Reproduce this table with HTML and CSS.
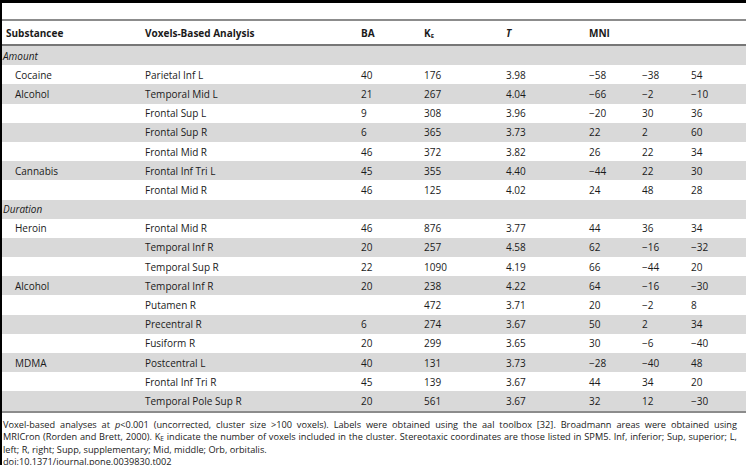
FILE: index.html
```html
<!DOCTYPE html>
<html lang="en">
<head>
  <meta charset="UTF-8" />
  <title>Table 2</title>
  <link rel="stylesheet" href="styles.css">
</head>
<body>
  <div class="frame">
    <table class="data">
      <colgroup>
        <col class="c-sub"><col class="c-vox"><col class="c-ba"><col class="c-ke">
        <col class="c-t"><col class="c-x"><col class="c-y"><col class="c-z">
      </colgroup>
      <thead>
        <tr>
          <th class="first">Substancee</th>
          <th>Voxels-Based Analysis</th>
          <th>BA</th>
          <th>K<sub>E</sub></th>
          <th><i>T</i></th>
          <th colspan="3">MNI</th>
        </tr>
      </thead>
      <tbody>
        <tr class="section"><td colspan="8"><i>Amount</i></td></tr>
        <tr><td class="drug">Cocaine</td><td>Parietal Inf L</td><td>40</td><td>176</td><td>3.98</td><td>−58</td><td>−38</td><td>54</td></tr>
        <tr><td class="drug">Alcohol</td><td>Temporal Mid L</td><td>21</td><td>267</td><td>4.04</td><td>−66</td><td>−2</td><td>−10</td></tr>
        <tr><td class="drug"></td><td>Frontal Sup L</td><td>9</td><td>308</td><td>3.96</td><td>−20</td><td>30</td><td>36</td></tr>
        <tr><td class="drug"></td><td>Frontal Sup R</td><td>6</td><td>365</td><td>3.73</td><td>22</td><td>2</td><td>60</td></tr>
        <tr><td class="drug"></td><td>Frontal Mid R</td><td>46</td><td>372</td><td>3.82</td><td>26</td><td>22</td><td>34</td></tr>
        <tr><td class="drug">Cannabis</td><td>Frontal Inf Tri L</td><td>45</td><td>355</td><td>4.40</td><td>−44</td><td>22</td><td>30</td></tr>
        <tr><td class="drug"></td><td>Frontal Mid R</td><td>46</td><td>125</td><td>4.02</td><td>24</td><td>48</td><td>28</td></tr>
        <tr class="section"><td colspan="8"><i>Duration</i></td></tr>
        <tr><td class="drug">Heroin</td><td>Frontal Mid R</td><td>46</td><td>876</td><td>3.77</td><td>44</td><td>36</td><td>34</td></tr>
        <tr><td class="drug"></td><td>Temporal Inf R</td><td>20</td><td>257</td><td>4.58</td><td>62</td><td>−16</td><td>−32</td></tr>
        <tr><td class="drug"></td><td>Temporal Sup R</td><td>22</td><td>1090</td><td>4.19</td><td>66</td><td>−44</td><td>20</td></tr>
        <tr><td class="drug">Alcohol</td><td>Temporal Inf R</td><td>20</td><td>238</td><td>4.22</td><td>64</td><td>−16</td><td>−30</td></tr>
        <tr><td class="drug"></td><td>Putamen R</td><td></td><td>472</td><td>3.71</td><td>20</td><td>−2</td><td>8</td></tr>
        <tr><td class="drug"></td><td>Precentral R</td><td>6</td><td>274</td><td>3.67</td><td>50</td><td>2</td><td>34</td></tr>
        <tr><td class="drug"></td><td>Fusiform R</td><td>20</td><td>299</td><td>3.65</td><td>30</td><td>−6</td><td>−40</td></tr>
        <tr><td class="drug">MDMA</td><td>Postcentral L</td><td>40</td><td>131</td><td>3.73</td><td>−28</td><td>−40</td><td>48</td></tr>
        <tr><td class="drug"></td><td>Frontal Inf Tri R</td><td>45</td><td>139</td><td>3.67</td><td>44</td><td>34</td><td>20</td></tr>
        <tr><td class="drug"></td><td>Temporal Pole Sup R</td><td>20</td><td>561</td><td>3.67</td><td>32</td><td>12</td><td>−30</td></tr>
      </tbody>
    </table>
    <div class="notes">
      <span class="line full">Voxel-based analyses at <i>p</i>&lt;0.001 (uncorrected, cluster size &gt;100 voxels). Labels were obtained using the aal toolbox [32]. Broadmann areas were obtained using</span>
      <span class="line full">MRICron (Rorden and Brett, 2000). K<sub>E</sub> indicate the number of voxels included in the cluster. Stereotaxic coordinates are those listed in SPM5. Inf, inferior; Sup, superior; L,</span>
      <span class="line">left; R, right; Supp, supplementary; Mid, middle; Orb, orbitalis.</span>
      <span class="line">doi:10.1371/journal.pone.0039830.t002</span>
    </div>
  </div>
</body>
</html>
```

FILE: styles.css
```css
html, body {
  margin: 0;
  padding: 0;
  background: #fff;
}
body {
  font-family: "Open Sans", "DejaVu Sans", sans-serif;
  font-size: 10px;
  color: #1a1a1a;
}
.frame {
  border-top: 3px solid #000;
  border-left: 2px solid #000;
  height: 465px;
  padding-top: 16px;
  box-sizing: border-box;
  overflow: hidden;
}
.data {
  width: 744px;
  border-collapse: collapse;
  table-layout: fixed;
  border-top: 2px solid #8c8c8c;
  border-bottom: 2px solid #8c8c8c;
}
.c-sub { width: 143px; }
.c-vox { width: 216px; }
.c-ba { width: 63px; }
.c-ke { width: 82px; }
.c-t { width: 83px; }
.c-x { width: 53px; }
.c-y { width: 49px; }
.c-z { width: 55px; }
th, td {
  padding: 0;
  text-align: left;
  white-space: nowrap;
}
thead th {
  height: 23px;
  font-weight: bold;
  border-bottom: 2px solid #777;
}
thead th.first {
  padding-left: 4px;
}
sub {
  font-size: 6px;
  line-height: 0;
  vertical-align: -1px;
}
tbody td {
  height: 19.2px;
}
tbody tr:nth-child(odd) {
  background: #d9d9d9;
}
td.drug {
  padding-left: 13px;
}
.section td {
  padding-left: 1px;
}
.notes {
  margin-top: 6px;
  margin-left: 1px;
  width: 734px;
  font-size: 9.2px;
  line-height: 12.5px;
}
.notes .line {
  display: block;
  white-space: nowrap;
}
.notes .line.full {
  text-align: justify;
  text-align-last: justify;
}
.notes sub {
  font-size: 6.5px;
}
```
